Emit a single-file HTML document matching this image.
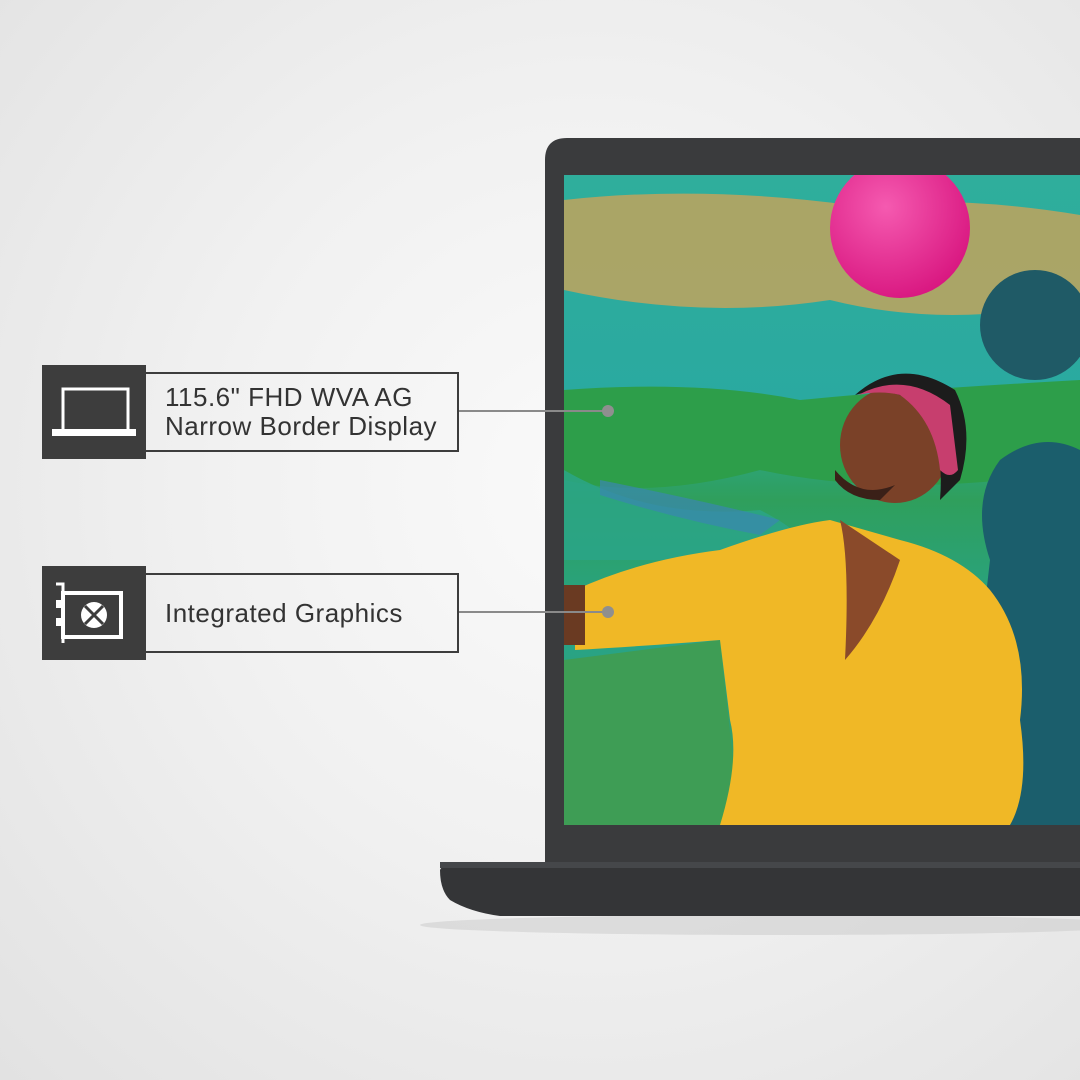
<!DOCTYPE html>
<html><head><style>
html,body{margin:0;padding:0}
body{width:1080px;height:1080px;overflow:hidden;position:relative;font-family:"Liberation Sans",sans-serif;
background:radial-gradient(ellipse at 55% 45%,#fafafa 0%,#f1f1f1 45%,#e2e2e2 100%);}
.ib{position:absolute;left:42px;width:104px;height:94px;background:#3d3d3d}
.tb{position:absolute;left:146px;width:313px;border:2px solid #3d3d3d;border-left:none;color:#333;font-size:26px;letter-spacing:0.5px;line-height:29px;box-sizing:border-box;padding-left:19px;display:flex;flex-direction:column;justify-content:center}
</style></head><body>
<svg style="position:absolute;left:0;top:0" width="1080" height="1080">
<defs>
<linearGradient id="scr" x1="0" y1="0" x2="0" y2="1">
<stop offset="0" stop-color="#2fae9c"/><stop offset="0.35" stop-color="#2aa9a0"/><stop offset="0.5" stop-color="#2f9f5c"/><stop offset="0.7" stop-color="#27a48a"/><stop offset="1" stop-color="#3a9a55"/>
</linearGradient>
<radialGradient id="ball" cx="0.4" cy="0.35" r="0.7"><stop offset="0" stop-color="#f55ab0"/><stop offset="1" stop-color="#d8157f"/></radialGradient>
<clipPath id="sc"><rect x="564" y="175" width="516" height="650"/></clipPath>
</defs>
<ellipse cx="780" cy="925" rx="360" ry="10" fill="#cfcfcf" opacity="0.6"/>
<path d="M545 862 V160 Q545 138 567 138 H1080 V862 Z" fill="#3a3b3d"/>
<g clip-path="url(#sc)">
<rect x="564" y="175" width="516" height="650" fill="url(#scr)"/>
<path d="M564 200 Q700 185 850 205 Q960 195 1080 215 L1080 300 Q950 330 830 300 Q700 320 564 290Z" fill="#b8a460" opacity="0.9"/>
<path d="M564 390 Q700 380 800 400 Q900 390 1080 380 L1080 470 Q900 500 760 470 Q650 500 564 480Z" fill="#2d9e4a"/>
<path d="M564 470 Q650 520 760 510 Q820 540 800 560 Q700 560 564 560Z" fill="#2aa58a" opacity="0.8"/>
<path d="M600 480 Q700 500 780 520 L760 535 Q680 520 600 495Z" fill="#3a86b0" opacity="0.7"/>
<path d="M564 660 L720 640 L740 825 H564Z" fill="#3e9d55"/>
<circle cx="1035" cy="325" r="55" fill="#1f5a66"/>
<path d="M1000 460 Q1040 430 1080 450 V825 H960 L990 560 Q970 500 1000 460Z" fill="#1b5e6c"/>
<circle cx="900" cy="228" r="70" fill="url(#ball)"/>
<path d="M575 590 Q640 560 720 550 Q790 525 830 520 L900 540 Q960 555 990 590 Q1030 640 1020 720 Q1030 790 1010 825 H720 Q740 760 730 720 L720 640 Q660 645 575 650Z" fill="#f0b826"/>
<path d="M840 520 Q850 560 845 660 Q880 620 900 560Z" fill="#8a4a2a"/>
<path d="M564 585 H585 V645 H564Z" fill="#6a3a22"/>
<ellipse cx="895" cy="445" rx="55" ry="58" fill="#7a4128"/>
<path d="M855 395 Q900 355 955 390 Q975 430 960 480 L940 500 Q945 440 920 405 Q890 385 855 395Z" fill="#1c1c1c"/>
<path d="M858 395 Q905 370 950 405 L958 470 Q950 480 940 470 Q935 420 900 395 Q880 390 858 395Z" fill="#c73e6e"/>
<path d="M835 470 Q860 500 895 485 L880 500 Q850 500 835 480Z" fill="#3a2018"/>
</g>
<path d="M440 870 Q442 864 460 862 H1080 V916 H500 Q470 912 450 900 Q440 890 440 870Z" fill="#343537"/>
<rect x="440" y="862" width="640" height="6" fill="#45474a"/>
<line x1="458" y1="411" x2="608" y2="411" stroke="#8a8a8a" stroke-width="2"/>
<circle cx="608" cy="411" r="6" fill="#8f8f8f"/>
<line x1="458" y1="612" x2="608" y2="612" stroke="#8a8a8a" stroke-width="2"/>
<circle cx="608" cy="612" r="6" fill="#8f8f8f"/>
</svg>
<div class="ib" style="top:365px">
<svg width="104" height="94"><rect x="21" y="24" width="65" height="42" fill="none" stroke="#fff" stroke-width="3"/><rect x="10" y="64" width="84" height="7" fill="#fff"/></svg>
</div>
<div class="tb" style="top:372px;height:80px"><div>115.6" FHD WVA AG</div><div>Narrow Border Display</div></div>
<div class="ib" style="top:566px">
<svg width="104" height="94"><path d="M14 18 H21 V77" fill="none" stroke="#fff" stroke-width="3"/><rect x="21" y="27" width="58" height="44" fill="none" stroke="#fff" stroke-width="4"/><rect x="14" y="34" width="6" height="8" fill="#fff"/><rect x="14" y="52" width="6" height="8" fill="#fff"/><circle cx="52" cy="49" r="13" fill="#fff"/><path d="M43 40 L61 58 M61 40 L43 58" stroke="#3d3d3d" stroke-width="3"/></svg>
</div>
<div class="tb" style="top:573px;height:80px"><div>Integrated Graphics</div></div>
</body></html>
